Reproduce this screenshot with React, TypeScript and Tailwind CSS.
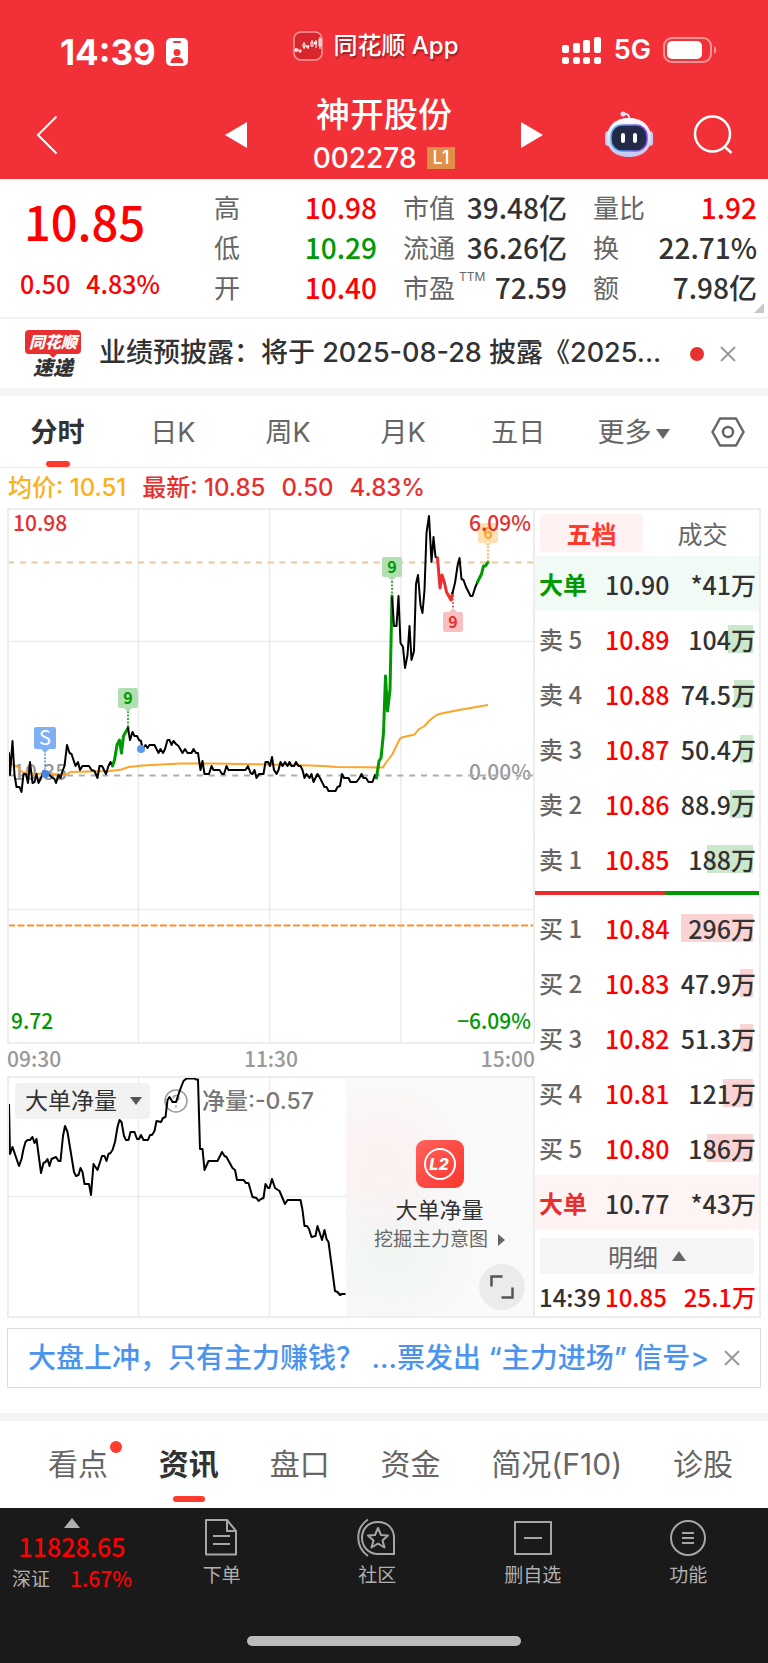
import { useState } from 'react';
import type { ReactNode } from 'react';

const stats = [
  [
    { label: '高', value: '10.98', color: 'text-[#ff0000]' },
    { label: '低', value: '10.29', color: 'text-[#009900]' },
    { label: '开', value: '10.40', color: 'text-[#ff0000]' }
  ],
  [
    { label: '市值', value: '39.48亿', color: 'text-[#323232]' },
    { label: '流通', value: '36.26亿', color: 'text-[#323232]' },
    { label: '市盈', sup: 'TTM', value: '72.59', color: 'text-[#323232]' }
  ],
  [
    { label: '量比', value: '1.92', color: 'text-[#ff0000]' },
    { label: '换', value: '22.71%', color: 'text-[#323232]' },
    { label: '额', value: '7.98亿', color: 'text-[#323232]' }
  ]
];

const sells = [
  { label: '卖 5', price: '10.89', amount: '104万', bar: 25 },
  { label: '卖 4', price: '10.88', amount: '74.5万', bar: 19 },
  { label: '卖 3', price: '10.87', amount: '50.4万', bar: 13 },
  { label: '卖 2', price: '10.86', amount: '88.9万', bar: 23 },
  { label: '卖 1', price: '10.85', amount: '188万', bar: 46 }
];

const buys = [
  { label: '买 1', price: '10.84', amount: '296万', bar: 72 },
  { label: '买 2', price: '10.83', amount: '47.9万', bar: 13 },
  { label: '买 3', price: '10.82', amount: '51.3万', bar: 13 },
  { label: '买 4', price: '10.81', amount: '121万', bar: 30 },
  { label: '买 5', price: '10.80', amount: '186万', bar: 46 }
];

const periods = ['分时', '日K', '周K', '月K', '五日'];
const sections = ['看点', '资讯', '盘口', '资金', '简况(F10)', '诊股'];

// Minute price line, split where the nine-count colouring changes
const priceSegments = [
  {
    color: '#000',
    width: 2,
    points:
      '1,245 2,267 4.5,233 6.5,267 8.5,279 11.5,279 13.5,284 15.5,266 18,266 20,275 22,254 24.5,275 26.5,274 28.5,266 30.5,275 33,270 35.5,263 37.5,265 40.5,266 43.5,269 46.5,271 48,275 50.5,267 52.5,270 54.5,263 56.5,258 59,237 61.5,245 63.5,246 67.5,258 70,254 72,262 74.5,258 81,258 83.5,262 86.5,263 89.5,270 91.5,258 94,258 98,266 100.5,258 102.5,254 104.5,258'
  },
  { color: '#009900', width: 3, points: '104.5,258 106.5,252 109,237 111.5,232 113.5,245 115.5,228 120,220' },
  {
    color: '#000',
    width: 2,
    points:
      '120,220 122,232 124.5,224 126.5,228 129,228 131,232 133,233 134.5,241 137.5,237 139.5,240 141.5,237 146.5,237 150.5,245 152.5,241 155,245 157,241 159.5,232 161.5,232 163.5,237 165.5,233 168,236 170.5,238 174.5,245 177,241 179.5,245 183.5,245 185.5,241 188,245 190,245 192.5,262 194.5,253 196.5,266 201,266 203.5,258 205.5,262 211.5,262 214,266 216,266 218.5,258 220.5,262 237.5,262 240,258 242.5,265 244.5,266 246.5,262 248.5,270 251,266 255.5,266 257.5,254 260,254 262,258 264,249 266,262 268.5,266 270.5,262 272.5,254 274.5,258 277,254 279.5,258 281.5,254 283.5,258 286,258 288,254 290.5,258 292.5,258 294.5,262 296.5,270 298.5,266 301.5,270 303.5,266 305.5,274 309.5,266 312,270 316.5,279 318.5,279 320.5,283 327.5,283 329.5,279 332,278 334,266 336,270 340.5,270 342.5,274 348.5,274 351.5,270 353.5,266 355.5,270 358,270 360.5,274 364.5,274 367,267 368.5,270'
  },
  { color: '#009900', width: 3, points: '368.5,270 371,253 373,250 375.5,225 377.5,168 379.5,203 382,182 384,88' },
  {
    color: '#000',
    width: 2,
    points:
      '384,88 386,118 388.5,118 390.5,88 392.5,135 395,139 397,160 399.5,147 401.5,118 403.5,152 406,143 408,76 410,67 412.5,97 414.5,105 416.5,82 418.5,25 421,8 423.5,54 425.5,29 427.5,49 429.5,50'
  },
  { color: '#ea2e2e', width: 3, points: '429.5,50 432,80 434,67 436.5,75 438.5,84 443,92 444.5,85' },
  {
    color: '#000',
    width: 2,
    points: '444.5,85 447,75 449.5,58 451.5,50 453.5,71 455.5,72 458,79 462.5,88 464.5,88 467,80 469.5,74'
  },
  { color: '#009900', width: 3, points: '469.5,74 473.5,66 475.5,58 477.5,58 480,54' }
];

const averagePoints =
  '1,248 2,255 7,258 10,259 14,264 25,265.5 58.5,266.5 62.5,264 102,263 113.5,261.5 120.5,259 135,257.5 172,255.5 205,255.5 262,256.5 302,257.5 315.5,258 328.5,259 375,259.5 378,254.5 382,249.5 384.5,246 391.5,231.5 393.5,229.5 406.5,226.5 410.5,221.5 416.5,218 421.5,212.5 428.5,207 435.5,205 453.5,201.5 480,197';

const netVolumePoints =
  '1,28 2,78 4.5,71 11,90 13.5,83 15.5,73 17.5,66 19.5,64 22,64 24.5,61 26.5,67 28.5,63 33,97 35.5,87 37.5,86 39.5,83 41.5,90 43.5,83 48,81 50.5,85 52.5,85 55,60 57,50 59.5,56 66,96 68,100 70.5,99 72.5,92 74.5,96 76.5,108 81,108 83,119 85.5,88 89.5,94 94,80 96.5,80 98.5,85 100.5,78 102.5,77 104.5,74 107,66 109.5,51 111.5,44 113.5,46 116,60 118,64 120.5,64 122.5,56 126.5,56 129,63 131,63 133,59 135.5,64 140,64 142,59 144,59 146.5,55 148.5,45 153,46 155,42 157.5,41 159.5,24 161.5,21 164.5,26 168,26 172,14 175.5,5 178.5,2.5 186.5,2.5 188,3.5 190,3.5 192,73 194.5,73 196.5,94 200.5,85 209.5,85 211.5,81 214,76 216.5,80 218.5,81 224.5,92 227,94 229,104 235.5,104 238,107 240.5,107 244.5,121 248.5,122 250.5,125 253,123 255.5,122 257.5,108 260,112 261.5,112 264,103 267,112 271.5,115 277,128 279.5,124 292.5,124 294.5,134 296.5,150 299,150 301,153 303.5,161 307.5,160 309.5,150 314,164 316.5,154 318.5,163 320.5,166 327,215 329.5,216 332,219 334,218 337.5,218';

export default function App() {
  return (
    <div lang="zh-CN" className="min-h-screen bg-white font-['Inter','Noto_Sans_CJK_SC',sans-serif] text-[#323232]">
      <Header />
      <Quote />
      <News />
      <PeriodTabs />
      <div className="flex h-10 items-center gap-4 px-2 text-2xl font-medium text-[#ea2e2e]">
        <span className="text-[#fcb019]">均价: 10.51</span>
        <span>最新: 10.85</span>
        <span>0.50</span>
        <span>4.83%</span>
      </div>
      <div className="flex px-[7px]">
        <div className="min-w-0 flex-1">
          <PriceChart />
          <NetVolume />
        </div>
        <OrderBook />
      </div>
      <Banner />
      <SectionTabs />
      <BottomBar />
    </div>
  );
}

function Header() {
  return (
    <header className="bg-[#f23037] pb-px text-white">
      <div className="grid grid-cols-[1fr_auto_1fr] items-start pt-7">
        <div className="flex items-center gap-2.5 pt-1 pl-[60px]">
          <span className="text-[35px] leading-10 font-bold">14:39</span>
          <svg className="h-7 w-[22px]" viewBox="0 0 22 28">
            <rect width="22" height="28" rx="5" fill="#fff" />
            <rect x="7" y="3" width="8" height="2" rx="1" fill="#f23037" />
            <circle cx="11" cy="14.500" r="3.500" fill="#f23037" />
            <path d="M4.500 25c0-4 3-6 6.500-6s6.500 2 6.500 6z" fill="#f23037" />
          </svg>
        </div>
        <div className="flex h-9 items-center gap-2.5 pr-4">
          <svg className="h-[30px] w-[30px]" viewBox="0 0 30 30" fill="none" stroke="#fff">
            <rect x="1" y="1" width="28" height="28" rx="7" fill="#d9262c" stroke="#f59a9d" strokeWidth="1.500" />
            <path d="M3 17v4M11 11v2M11 16v2M15 14v4M19 9v2M19 15v1M23 9v8M27 6v12" strokeWidth="1" />
            <path d="M2 18h3v2H2zM6 19h2v2H6zM10 13h2v3h-2zM13 15h3v1h-3zM18 11h2v4h-2zM21.500 11h2v2h-2zM26 8h2v7h-2z" strokeWidth="1" />
          </svg>
          <span className="text-2xl font-medium [text-shadow:1px_2px_2px_rgba(0,0,0,0.4)]">同花顺 App</span>
        </div>
        <div className="flex h-11 items-center justify-end gap-3 pr-[51px]">
          <svg className="h-[27px] w-10" viewBox="0 0 40 27" fill="#fff">
            <rect x="0" y="8" width="7" height="8" rx="2" />
            <rect x="11" y="6" width="7" height="10" rx="2" />
            <rect x="21" y="3" width="7" height="13" rx="2" />
            <rect x="32" y="0" width="7" height="16" rx="2" />
            <rect x="0" y="20" width="7" height="7" rx="2.500" />
            <rect x="11" y="20" width="7" height="7" rx="2.500" />
            <rect x="21" y="20" width="7" height="7" rx="2.500" />
            <rect x="32" y="20" width="7" height="7" rx="2.500" />
          </svg>
          <span className="text-[27px] leading-8 font-semibold">5G</span>
          <svg className="h-[26px] w-[54px]" viewBox="0 0 54 26">
            <rect x="1" y="1" width="47" height="24" rx="8" fill="none" stroke="#f8969a" strokeWidth="2" />
            <rect x="4" y="4" width="35" height="18" rx="5" fill="#fff" />
            <path d="M51 9c3 2 3 6 0 8z" fill="#f8969a" />
          </svg>
        </div>
      </div>

      <div className="grid grid-cols-[1fr_318px_1fr] items-center pt-5">
        <div className="pl-9">
          <button aria-label="返回" className="block">
            <svg className="h-10 w-[22px]" viewBox="0 0 22 40" fill="none" stroke="#fff" strokeWidth="2">
              <path d="M20.500 1.500 2 20l18.500 18.500" />
            </svg>
          </button>
        </div>
        <div className="flex items-center justify-between">
          <button aria-label="上一只">
            <svg className="h-[26px] w-[22px]" viewBox="0 0 22 26" fill="#fff">
              <path d="M22 0v26L0 13z" />
            </svg>
          </button>
          <div className="flex flex-col items-center">
            <h1 className="text-[34px] leading-[46px] font-medium">神开股份</h1>
            <div className="flex items-center gap-2.5">
              <span className="text-[28px] leading-10 font-medium">002278</span>
              <span className="bg-[#e08e49] px-1.5 text-lg leading-[22px] font-medium">L1</span>
            </div>
          </div>
          <button aria-label="下一只">
            <svg className="h-[26px] w-[22px]" viewBox="0 0 22 26" fill="#fff">
              <path d="M0 0v26l22-13z" />
            </svg>
          </button>
        </div>
        <div className="flex items-center justify-end gap-10 pr-[35px]">
          <button aria-label="智能助手">
            <Robot />
          </button>
          <button aria-label="搜索">
            <svg className="h-10 w-10" viewBox="0 0 40 40" fill="none" stroke="#fff" strokeWidth="2.500">
              <circle cx="19.500" cy="19" r="17.500" />
              <path d="m32 32 6.500 6" />
            </svg>
          </button>
        </div>
      </div>
    </header>
  );
}

function Robot() {
  return (
    <svg className="h-12 w-12" viewBox="0 0 48 48">
      <defs>
        <linearGradient id="shell" x1="0" y1="0" x2="0" y2="1">
          <stop offset="0" stopColor="#ffffff" />
          <stop offset="1" stopColor="#c3c5ee" />
        </linearGradient>
        <linearGradient id="visor" x1="0" y1="0" x2="1" y2="0">
          <stop offset="0" stopColor="#4bb5ee" />
          <stop offset="1" stopColor="#8a4be8" />
        </linearGradient>
      </defs>
      <path d="M18 3c5-1 7 2 6 6" fill="none" stroke="#dfe0f8" strokeWidth="2" />
      <circle cx="18" cy="3" r="2.500" fill="#dfe0f8" />
      <rect x="0" y="20" width="7" height="15" rx="3.500" fill="#c9cbf0" />
      <rect x="41" y="20" width="7" height="15" rx="3.500" fill="#c9cbf0" />
      <path d="M24 7c14 0 22 8 22 20S37 46 24 46 2 39 2 27 10 7 24 7z" fill="url(#shell)" />
      <rect x="6" y="14" width="36" height="26" rx="11" fill="#232a48" stroke="url(#visor)" strokeWidth="1.500" />
      <rect x="16" y="22" width="4" height="10" rx="2" fill="#fff" />
      <rect x="28" y="22" width="4" height="10" rx="2" fill="#fff" />
    </svg>
  );
}

function Quote() {
  return (
    <section className="relative flex border-b-2 border-[#f2f2f2] pt-2 pr-[11px] pb-2.5 pl-5 font-['Noto_Sans_CJK_SC',sans-serif] font-medium">
      <div className="w-[194px] text-[#ff0000]">
        <div className="pt-1 pl-1 text-[47px] leading-[60px]">10.85</div>
        <div className="flex gap-4 pt-4 text-[25px] leading-8">
          <span>0.50</span>
          <span>4.83%</span>
        </div>
      </div>
      <div className="grid flex-1 grid-cols-[163px_164px_1fr] gap-x-[26px]">
        {stats.map((column, i) => (
          <dl key={i}>
            {column.map(item => (
              <div key={item.label} className="flex h-10 items-center justify-between">
                <dt className="flex text-[26px] leading-8 font-normal text-[#666]">
                  {item.label}
                  {'sup' in item && (
                    <sup className="top-0 pl-1 font-['Inter',sans-serif] text-xs leading-none">{item.sup}</sup>
                  )}
                </dt>
                <dd className={`text-[28px] leading-9 ${item.color}`}>{item.value}</dd>
              </div>
            ))}
          </dl>
        ))}
      </div>
      <svg className="absolute right-1 bottom-1 h-2.5 w-2.5" viewBox="0 0 10 10" fill="#c8c8c8">
        <path d="M10 0v10H0z" />
      </svg>
    </section>
  );
}

function CloseIcon() {
  return (
    <svg className="h-4 w-4" viewBox="0 0 16 16" fill="none" stroke="#999" strokeWidth="2">
      <path d="m1 1 14 14M15 1 1 15" />
    </svg>
  );
}

function News() {
  return (
    <section className="flex h-[77px] items-center border-b-8 border-[#f4f4f4] pr-8 pl-6">
      <div className="flex w-[58px] shrink-0 flex-col items-center font-black italic">
        <span className="rounded-sm bg-[#e93030] px-1 text-base leading-6 text-white">同花顺</span>
        <svg className="h-1 w-2" viewBox="0 0 8 4" fill="#e93030">
          <path d="M0 0h8L4 4z" />
        </svg>
        <span className="text-xl leading-5">速递</span>
      </div>
      <a href="#news" className="min-w-0 flex-1 pl-[17px] text-[27px] font-medium whitespace-nowrap">
        业绩预披露：将于 2025-08-28 披露《2025...
      </a>
      <span className="h-3.5 w-3.5 shrink-0 rounded-full bg-[#e93030]" />
      <button aria-label="关闭" className="ml-4">
        <CloseIcon />
      </button>
    </section>
  );
}

function PeriodTabs() {
  const [active, setActive] = useState('分时');

  return (
    <nav className="flex h-[72px] border-b border-[#e9e9e9] pt-1 text-[27px] text-[#666]">
      {periods.map(period => (
        <button
          key={period}
          onClick={() => setActive(period)}
          className={period === active ? 'relative w-[15%] font-bold text-[#323232]' : 'relative w-[15%]'}
        >
          {period}
          {period === active && (
            <span className="absolute bottom-0 left-1/2 h-1.5 w-6 -translate-x-1/2 rounded-full bg-[#ff3b30]" />
          )}
        </button>
      ))}
      <button className="flex w-[15%] items-center justify-center gap-1">
        更多
        <svg className="h-2.5 w-3.5" viewBox="0 0 14 10" fill="#666">
          <path d="M0 0h14L7 10z" />
        </svg>
      </button>
      <button aria-label="设置" className="flex flex-1 items-center justify-center pr-1 pb-1">
        <svg className="h-[30px] w-[34px]" viewBox="0 0 34 30" fill="none" stroke="#666" strokeWidth="2.500">
          <path d="M9 1.500h16L32.500 15 25 28.500H9L1.500 15z" strokeLinejoin="round" />
          <circle cx="17" cy="15" r="5" />
        </svg>
      </button>
    </nav>
  );
}

interface FlagProps {
  x: number;
  y: number;
  color: string;
  fill: string;
  down?: boolean;
  children: string;
}

function Flag({ x, y, color, fill, down, children }: FlagProps) {
  return (
    <g>
      <rect x={x - 10} y={y} width="20" height="20" rx="2" fill={fill} />
      <path d={down ? `M${x - 4} ${y}h8l-4-4z` : `M${x - 4} ${y + 20}h8l-4 4z`} fill={fill} />
      <text x={x} y={y + 16} textAnchor="middle" fontSize="16" fontWeight="700" fill={color}>
        {children}
      </text>
    </g>
  );
}

function PriceChart() {
  return (
    <div className="font-['Noto_Sans_CJK_SC',sans-serif] text-[21px] font-medium">
      <div className="relative border-2 border-[#ededed] leading-6">
        <svg className="block w-full" viewBox="1 2 524 532" fill="none">
          <path d="M130.500 0v535M261.500 0v535M393 0v535M0 133.500h528M0 401.500h528" stroke="#ececec" strokeWidth="1.500" />
          <path d="M0 54.500h528" stroke="#e6c9a2" strokeWidth="2" strokeDasharray="6 5.800" />
          <path d="M0 417.500h528" stroke="#fb9030" strokeWidth="2" strokeDasharray="7 2.500" />
        </svg>
        <span className="absolute bottom-2.5 left-0.5 text-[#009900]">9.72</span>
        <span className="absolute right-0.5 bottom-2.5 text-[#009900]">−6.09%</span>
        <span className="absolute top-[249px] left-1 text-[#999]">10.35</span>
        <span className="absolute top-[249px] right-0.5 text-[#999]">0.00%</span>
        <svg className="absolute inset-0 w-full" viewBox="1 2 524 532" fill="none">
          <path d="M0 267.500h528" stroke="#adadad" strokeWidth="2" strokeDasharray="6 5.800" />
          <polyline points={averagePoints} stroke="#fda429" strokeWidth="2" strokeLinejoin="round" />
          {priceSegments.map(segment => (
            <polyline
              key={segment.points}
              points={segment.points}
              stroke={segment.color}
              strokeWidth={segment.width}
              strokeLinejoin="round"
              strokeLinecap="round"
            />
          ))}
          <path d="M37 242v22" stroke="#4a90f0" strokeWidth="1.500" strokeDasharray="2 1.500" />
          <path d="M120 203v17M384 73v16" stroke="#009900" strokeWidth="1.500" strokeDasharray="2 1.500" />
          <path d="M445 87v14" stroke="#ea2e2e" strokeWidth="1.500" strokeDasharray="2 1.500" />
          <path d="M480 38v16" stroke="#fda429" strokeWidth="1.500" strokeDasharray="2 1.500" />
          <rect x="26" y="219" width="22" height="22" rx="2" fill="#7fb0f5" />
          <path d="M33 241h8l-4 4z" fill="#7fb0f5" />
          <text x="37" y="237" textAnchor="middle" fontSize="20" fontWeight="400" fill="#fff">
            S
          </text>
          <circle cx="37.500" cy="266" r="4" fill="#4a88e0" />
          <circle cx="133" cy="241" r="4" fill="#5b97ea" />
          <Flag x={120} y={180} color="#009900" fill="#b0e0b2">9</Flag>
          <Flag x={384} y={49} color="#009900" fill="#b0e0b2">9</Flag>
          <Flag x={445} y={104} color="#ea2e2e" fill="#f9c0c2" down>9</Flag>
          <Flag x={480} y={15} color="#fda429" fill="#fee0b3">6</Flag>
        </svg>
        <span className="absolute top-0 left-1 text-[#ea2e2e]">10.98</span>
        <span className="absolute top-0 right-0.5 text-[#ea2e2e]">6.09%</span>
      </div>
      <div className="flex h-8 items-start justify-between leading-7 text-[#999]">
        <span>09:30</span>
        <span>11:30</span>
        <span>15:00</span>
      </div>
    </div>
  );
}

function NetVolume() {
  return (
    <div className="relative flex border-2 border-[#ededed]">
      <svg className="block w-0 grow-[337]" viewBox="1 2 337 238" fill="none">
        <path d="M130.500 0v241M261.500 0v241M0 120.500h340" stroke="#ececec" strokeWidth="1.500" />
      </svg>
      <div className="flex w-0 grow-[187] flex-col items-center bg-[#fafafa] bg-[radial-gradient(circle_at_20%_35%,#fcf0f0,transparent_45%),radial-gradient(circle_at_25%_72%,#eff5f2,transparent_45%)] pt-[62px]">
        <svg className="h-12 w-12" viewBox="0 0 48 48">
          <defs>
            <linearGradient id="level2" x1="0" y1="0" x2="1" y2="1">
              <stop offset="0" stopColor="#ff625c" />
              <stop offset="1" stopColor="#fb352d" />
            </linearGradient>
          </defs>
          <rect width="48" height="48" rx="9" fill="url(#level2)" />
          <circle cx="24" cy="24" r="15" fill="none" stroke="#fff" strokeWidth="2" />
          <text x="23" y="30" textAnchor="middle" fontSize="16" fontWeight="800" fontStyle="italic" fill="#fff">
            L2
          </text>
        </svg>
        <div className="pt-1.5 text-[22px] leading-8">大单净量</div>
        <a href="#level2" className="flex items-center gap-2.5 text-[19px] leading-7 text-[#666]">
          挖掘主力意图
          <svg className="h-3 w-[7px]" viewBox="0 0 7 12" fill="#666">
            <path d="M0 0v12l7-6z" />
          </svg>
        </a>
      </div>
      <div className="absolute top-[5px] left-1.5 flex items-center gap-3.5">
        <div className="relative flex items-center rounded bg-[#f1f1f1]/90">
          <select aria-label="指标" className="h-9 w-[135px] appearance-none pl-2.5 text-[23px]">
            <option>大单净量</option>
          </select>
          <svg className="pointer-events-none absolute right-2 h-2 w-3" viewBox="0 0 12 8" fill="#555">
            <path d="M0 0h12L6 8z" />
          </svg>
        </div>
        <button aria-label="说明">
          <svg className="h-6 w-6" viewBox="0 0 24 24" fill="none" stroke="#999" strokeWidth="1.500">
            <circle cx="12" cy="12" r="11" />
            <path d="M9 9.500c0-4 6-4 6-.5 0 2.500-3 2.500-3 5M12 16.500v2" />
          </svg>
        </button>
        <span className="text-[23px] font-medium text-[#777]">净量:-0.57</span>
      </div>
      <svg className="pointer-events-none absolute inset-0 w-full" viewBox="1 2 524 238" fill="none">
        <polyline points={netVolumePoints} stroke="#000" strokeWidth="2" strokeLinejoin="round" />
      </svg>
      <button aria-label="全屏" className="absolute right-2 bottom-1.5 rounded-full bg-[#ebebeb] p-[11px]">
        <svg className="h-6 w-6" viewBox="0 0 24 24" fill="none" stroke="#555" strokeWidth="2.500">
          <path d="M1.500 11.500v-10h11M22.500 12.500v10h-11" />
        </svg>
      </button>
    </div>
  );
}

interface LevelRowProps {
  label: string;
  price: string;
  amount: string;
  bar?: number;
  barColor?: string;
}

function LevelRow({ label, price, amount, bar = 0, barColor = '' }: LevelRowProps) {
  return (
    <tr className="h-[55px]">
      <th className="w-[70px] p-0 pl-1 text-left text-2xl font-medium text-[#666]">{label}</th>
      <td className="p-0 text-[#ff0000]">{price}</td>
      <td className="p-0 text-right">
        <div className="relative mr-[3px]">
          <span className={`absolute inset-y-1 right-[3px] ${barColor}`} style={{ width: bar }} />
          <span className="relative">{amount}</span>
        </div>
      </td>
    </tr>
  );
}

function BigOrderRow({ price, amount, className }: { price: string; amount: string; className: string }) {
  return (
    <tr className={`h-[55px] ${className}`}>
      <th className="w-[70px] p-0 pl-1 text-left text-2xl font-bold">大单</th>
      <td className="p-0 text-[#323232]">{price}</td>
      <td className="p-0 pr-[3px] text-right text-[#323232]">{amount}</td>
    </tr>
  );
}

function BookTable({ children }: { children: ReactNode }) {
  return (
    <table className="w-full border-collapse text-[25px] leading-9">
      <tbody>{children}</tbody>
    </table>
  );
}

function OrderBook() {
  return (
    <div className="flex w-[226px] shrink-0 flex-col border-y-2 border-r-2 border-[#ededed] font-['Noto_Sans_CJK_SC',sans-serif] font-medium">
      <div className="grid grid-cols-2 gap-2 px-[5px] pt-1 pb-1 text-[25px] leading-[38px]">
        <button className="rounded bg-[#fff2f2] font-bold text-[#ff3b30]">五档</button>
        <button className="font-normal text-[#666]">成交</button>
      </div>
      <BookTable>
        <BigOrderRow price="10.90" amount="*41万" className="bg-[#f2faf6] text-[#009900]" />
        {sells.map(level => (
          <LevelRow key={level.label} {...level} barColor="bg-[#cce8cc]" />
        ))}
      </BookTable>
      <div className="my-[5px] flex h-1">
        <div className="grow-[58] bg-[#ea2e2e]" />
        <div className="grow-[42] bg-[#009900]" />
      </div>
      <BookTable>
        {buys.map(level => (
          <LevelRow key={level.label} {...level} barColor="bg-[#fad3d4]" />
        ))}
        <BigOrderRow price="10.77" amount="*43万" className="bg-[#fff4f4] text-[#ea2e2e]" />
      </BookTable>
      <button className="mx-[5px] mt-2 flex items-center justify-center gap-3.5 bg-[#f5f5f5] text-[25px] leading-9 font-normal text-[#666]">
        明细
        <svg className="h-2.5 w-3.5" viewBox="0 0 14 10" fill="#666">
          <path d="M7 0l7 10H0z" />
        </svg>
      </button>
      <div className="flex flex-1 items-center pt-1 pr-[3px] pl-1 text-2xl leading-8">
        <span className="w-[66px]">14:39</span>
        <span className="text-[#ff0000]">10.85</span>
        <span className="flex-1 text-right text-[#ff0000]">25.1万</span>
      </div>
    </div>
  );
}

function Banner() {
  return (
    <div className="mx-[7px] mt-2.5 mb-[25px] flex h-[60px] items-center justify-between border border-[#dcdcdc] px-5">
      <a href="#promo" className="text-[28px] font-medium whitespace-nowrap text-[#4a94ee]">
        大盘上冲，只有主力赚钱？ ...票发出 “主力进场” 信号&gt;
      </a>
      <button aria-label="关闭">
        <CloseIcon />
      </button>
    </div>
  );
}

function SectionTabs() {
  const [active, setActive] = useState('资讯');

  return (
    <nav className="flex h-[95px] items-center justify-between border-t-8 border-[#f4f4f4] pr-[35px] pl-12 text-[30px] text-[#666]">
      {sections.map(section => (
        <button
          key={section}
          onClick={() => setActive(section)}
          className={section === active ? 'relative h-full font-bold text-[#323232]' : 'relative h-full'}
        >
          {section}
          {section === '看点' && <span className="absolute top-5 -right-3.5 h-3 w-3 rounded-full bg-[#ff3b30]" />}
          {section === active && (
            <span className="absolute bottom-1.5 left-1/2 h-1.5 w-8 -translate-x-1/2 rounded-full bg-[#ff3b30]" />
          )}
        </button>
      ))}
    </nav>
  );
}

function BarItem({ label, children }: { label: string; children: ReactNode }) {
  return (
    <button className="flex flex-1 flex-col items-center gap-1 pt-1">
      <svg className="h-10 w-[42px]" viewBox="0 0 42 40" fill="none" stroke="#a6a6a6" strokeWidth="2">
        {children}
      </svg>
      {label}
    </button>
  );
}

function BottomBar() {
  return (
    <footer className="bg-[#1a1a1a] text-[#b0b0b0]">
      <div className="flex h-32 items-start pt-1.5 pr-0.5 text-[19px] leading-7">
        <button className="flex w-[144px] flex-col items-center font-['Noto_Sans_CJK_SC',sans-serif]">
          <svg className="mt-1 h-2.5 w-4" viewBox="0 0 16 10" fill="#b0b0b0">
            <path d="M8 0l8 10H0z" />
          </svg>
          <span className="text-[25px] leading-9 font-medium text-[#ff0000]">11828.65</span>
          <span className="flex gap-5">
            深证
            <span className="text-[21px] font-medium text-[#ff0000]">1.67%</span>
          </span>
        </button>
        <BarItem label="下单">
          <path d="M5 2h21l9 11v23.500H5zM26 2v11h9M12 18h17M12 26h17" strokeLinejoin="round" />
        </BarItem>
        <BarItem label="社区">
          <path d="M12 1.500C-1 10-1 29 12 38M22 4C11 4 6 12 6 20s6 16 16 16h16V20C38 11 32 4 22 4z" />
          <path d="m22 10 3 7 7 .5-5.500 5 2 7L22 25.500 15.500 29.500l2-7-5.500-5 7-.5z" strokeLinejoin="round" />
        </BarItem>
        <BarItem label="删自选">
          <path d="M3 4h36v32H3zM12 20h18" strokeLinejoin="round" />
        </BarItem>
        <BarItem label="功能">
          <circle cx="21" cy="20" r="17" />
          <path d="M15 15h12M15 20h12M15 25h12" />
        </BarItem>
      </div>
      <div className="flex h-[27px] justify-center">
        <div className="h-2.5 w-[274px] rounded-full bg-[#bcbcbc]" />
      </div>
    </footer>
  );
}
